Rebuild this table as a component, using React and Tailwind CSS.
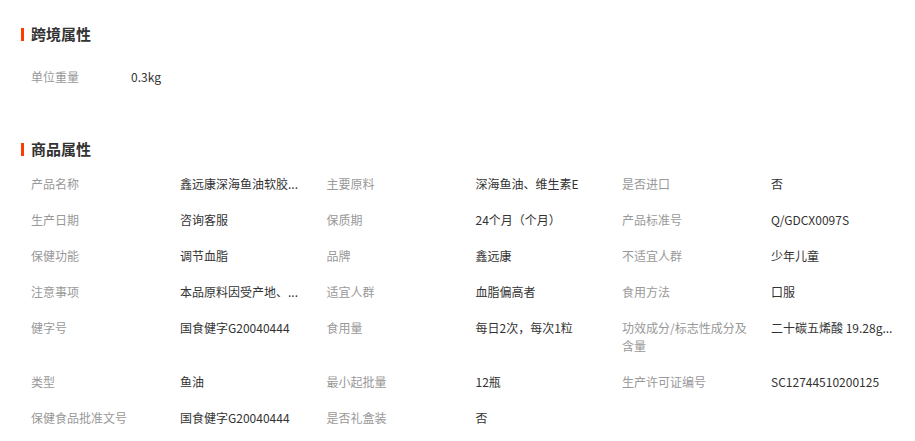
import React from "react";

const rows = [
  [
    ["产品名称", "鑫远康深海鱼油软胶..."],
    ["主要原料", "深海鱼油、维生素E"],
    ["是否进口", "否"],
  ],
  [
    ["生产日期", "咨询客服"],
    ["保质期", "24个月（个月）"],
    ["产品标准号", "Q/GDCX0097S"],
  ],
  [
    ["保健功能", "调节血脂"],
    ["品牌", "鑫远康"],
    ["不适宜人群", "少年儿童"],
  ],
  [
    ["注意事项", "本品原料因受产地、..."],
    ["适宜人群", "血脂偏高者"],
    ["食用方法", "口服"],
  ],
  [
    ["健字号", "国食健字G20040444"],
    ["食用量", "每日2次，每次1粒"],
    ["功效成分/标志性成分及含量", "二十碳五烯酸 19.28g..."],
  ],
  [
    ["类型", "鱼油"],
    ["最小起批量", "12瓶"],
    ["生产许可证编号", "SC12744510200125"],
  ],
  [
    ["保健食品批准文号", "国食健字G20040444"],
    ["是否礼盒装", "否"],
  ],
];

function Cell({ label, value }) {
  return (
    <div className="flex w-[295.5px] shrink-0">
      <div className="w-[130px] mr-[19px] shrink-0 text-[#999999] break-all">{label}</div>
      <div className="w-[125px] whitespace-nowrap text-[#333333]">{value}</div>
    </div>
  );
}

function Heading({ children }) {
  return (
    <div className="flex items-center h-[20px]">
      <span className="w-[3px] h-[13px] bg-[#ff3c00] mr-[7px]" />
      <span className="text-[15px] font-bold text-[#333333] leading-[20px]">{children}</span>
    </div>
  );
}

export default function App() {
  return (
    <div
      className="w-[915px] h-[441px] overflow-hidden bg-white pl-[21px] pt-[24px] text-[12px] leading-[18px]"
      style={{ fontFamily: '"Noto Sans CJK SC", "Liberation Sans", sans-serif' }}
    >
      <Heading>跨境属性</Heading>
      <div className="mt-[15px] pl-[10px] py-[9px] flex">
        <div className="w-[100px] text-[#999999]">单位重量</div>
        <div className="text-[#333333]">0.3kg</div>
      </div>
      <div className="mt-[44px]">
        <Heading>商品属性</Heading>
      </div>
      <div className="mt-[7px] pl-[10px]">
        {rows.map((r, i) => (
          <div key={i} className="flex py-[9px]">
            {r.map(([l, v], j) => (
              <Cell key={j} label={l} value={v} />
            ))}
          </div>
        ))}
      </div>
    </div>
  );
}
